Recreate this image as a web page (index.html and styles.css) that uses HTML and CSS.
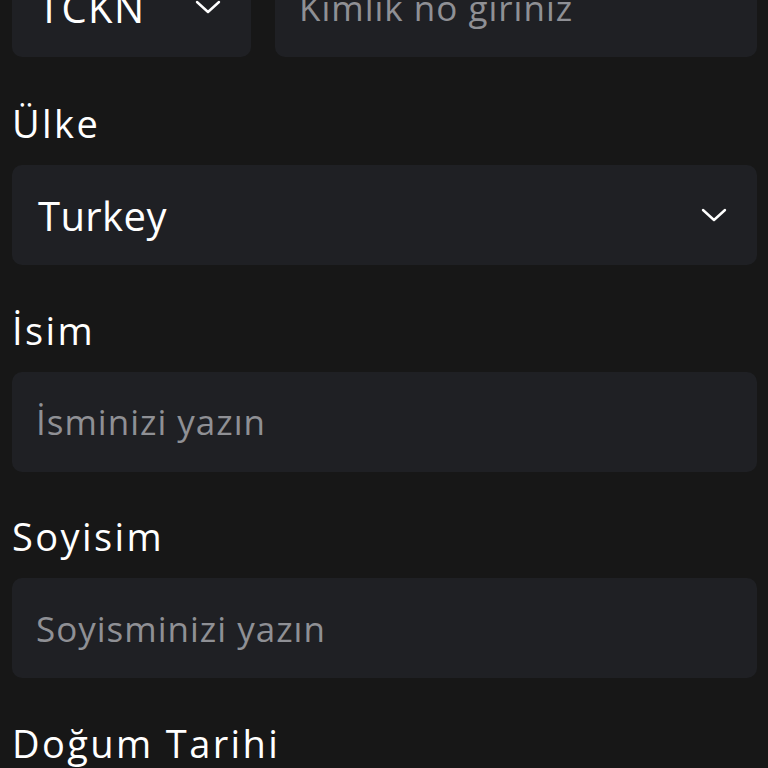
FILE: index.html
```html
<!DOCTYPE html>
<html lang="tr">
<head>
<meta charset="utf-8">
<title>Form</title>
<link rel="stylesheet" href="styles.css">
</head>
<body>
<div class="form">
  <div class="row-top">
    <div class="box select">
      <span class="value value-sm">TCKN</span>
      <svg class="chev" viewBox="0 0 26 14" width="26" height="14"><path d="M2 2 L13 12 L24 2" fill="none" stroke="#fff" stroke-width="2.4" stroke-linecap="round" stroke-linejoin="round"/></svg>
    </div>
    <div class="box">
      <span class="placeholder">Kimlik no giriniz</span>
    </div>
  </div>

  <div class="label label-first">Ülke</div>
  <div class="box select">
    <span class="value">Turkey</span>
    <svg class="chev" viewBox="0 0 26 14" width="26" height="14"><path d="M2 2 L13 12 L24 2" fill="none" stroke="#fff" stroke-width="2.4" stroke-linecap="round" stroke-linejoin="round"/></svg>
  </div>

  <div class="label">İsim</div>
  <div class="box">
    <span class="placeholder">İsminizi yazın</span>
  </div>

  <div class="label">Soyisim</div>
  <div class="box">
    <span class="placeholder">Soyisminizi yazın</span>
  </div>

  <div class="label">Doğum Tarihi</div>
</div>
</body>
</html>
```

FILE: styles.css
```css
html, body {
  margin: 0;
  padding: 0;
  background: #171717;
}
body {
  font-family: "Open Sans", "DejaVu Sans", sans-serif;
  color: #ffffff;
  overflow: hidden;
  height: 768px;
}
.form {
  margin-top: -43px;
  padding: 0 11px 0 12px;
}
.row-top {
  display: grid;
  grid-template-columns: 239px 1fr;
  gap: 24px;
}
.box {
  height: 100px;
  box-sizing: border-box;
  background: #1f2024;
  border-radius: 10px;
  display: flex;
  align-items: center;
  padding: 0 30px 0 24px;
}
.select {
  justify-content: space-between;
}
.value {
  font-size: 40px;
  color: #ffffff;
  padding-left: 2px;
  letter-spacing: 0.4px;
}
.value-sm {
  letter-spacing: 1.4px;
}
.placeholder {
  font-size: 35px;
  color: #8f9095;
  letter-spacing: 1px;
}
.chev {
  flex: none;
}
.label {
  font-size: 38px;
  line-height: 50px;
  letter-spacing: 2.4px;
  margin: 39.5px 0 17px;
}
.label-first {
  margin-top: 41px;
}
```
